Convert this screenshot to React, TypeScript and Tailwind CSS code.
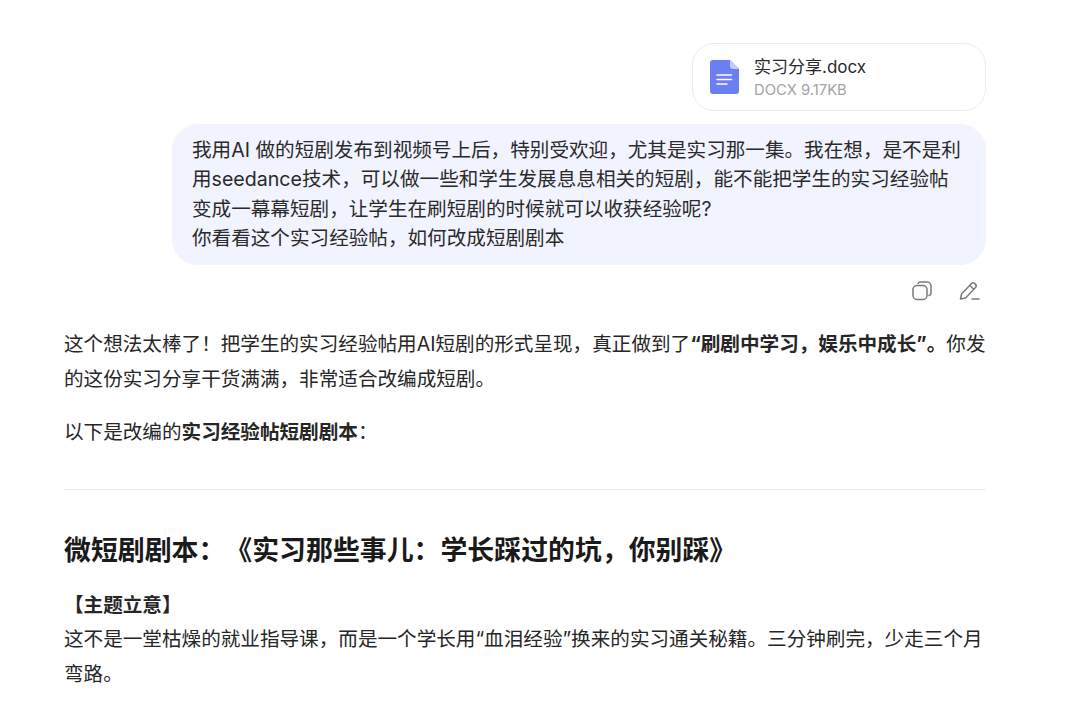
import React from "react";

const FONT = "font-['Inter','Noto_Sans_CJK_SC',sans-serif]";

function DocIcon() {
  return (
    <svg width="29" height="34" viewBox="0 0 29 34" fill="none">
      <path d="M3 0h17l9 9v22a3 3 0 0 1-3 3H3a3 3 0 0 1-3-3V3a3 3 0 0 1 3-3z" fill="#6b7ff0" />
      <path d="M20 0l9 9h-6a3 3 0 0 1-3-3V0z" fill="#c3cbfa" />
      <path d="M7 15h14.500M7 19.500h14.500M7 24h10" stroke="#fff" strokeWidth="1.5" strokeLinecap="round" />
    </svg>
  );
}

function CopyIcon() {
  return (
    <svg width="22" height="22" viewBox="0 0 22 22" fill="none" stroke="#7a7a7a" strokeWidth="1.500">
      <rect x="2" y="5.500" width="14" height="14" rx="4" />
      <path d="M7 3.500a2.500 2.500 0 0 1 2.500-1.500h6.500a4 4 0 0 1 4 4v7a2.500 2.500 0 0 1-2 2.500" strokeLinecap="round" />
    </svg>
  );
}

function EditIcon() {
  return (
    <svg width="22" height="22" viewBox="0 0 22 22" fill="none" stroke="#7a7a7a" strokeWidth="1.500" strokeLinejoin="round">
      <path d="M2.500 19l1-5L13.500 3.500a2.200 2.200 0 0 1 3.100 0l.9.9a2.200 2.200 0 0 1 0 3.100L7.500 18z" />
      <path d="M12 5.500l4 4" />
      <path d="M14 19h7" strokeLinecap="round" />
    </svg>
  );
}

export default function App() {
  return (
    <div className={`${FONT} h-[706px] w-[1080px] overflow-hidden bg-white text-[19.6px] text-[#262626] [text-spacing-trim:space-all]`}>
      <div className="ml-[64px] w-[922px] pt-[43px]">
        {/* file card */}
        <div className="flex justify-end">
          <div className="flex h-[68px] w-[294px] items-center rounded-[22px] border border-[#ececec] pl-[17px]">
            <DocIcon />
            <div className="ml-[15px]">
              <div className="text-[17px] leading-[26px] text-[#2a2a2a]">实习分享.docx</div>
              <div className="text-[14.800px] leading-[21px] text-[#a3a3a3]">DOCX 9.17KB</div>
            </div>
          </div>
        </div>

        {/* user bubble */}
        <div className="mt-[13px] flex justify-end">
          <div className="w-[814px] rounded-[26px] bg-[#f1f3fe] py-[12px] pl-[20px] pr-[22px] leading-[29.300px] text-[#2a2a2a]">
            我用AI 做的短剧发布到视频号上后，特别受欢迎，尤其是实习那一集。我在想，是不是利用seedance技术，可以做一些和学生发展息息相关的短剧，能不能把学生的实习经验帖变成一幕幕短剧，让学生在刷短剧的时候就可以收获经验呢?
            <br />
            你看看这个实习经验帖，如何改成短剧剧本
          </div>
        </div>

        {/* actions */}
        <div className="mt-[15px] flex justify-end gap-[25px] pr-[6px]">
          <CopyIcon />
          <EditIcon />
        </div>

        {/* answer */}
        <p className="mt-[25px] leading-[35px]">
          这个想法太棒了！把学生的实习经验帖用AI短剧的形式呈现，真正做到了<strong>“刷剧中学习，娱乐中成长”。</strong>你发的这份实习分享干货满满，非常适合改编成短剧。
        </p>
        <p className="mt-[18px] leading-[35px]">
          以下是改编的<strong>实习经验帖短剧剧本</strong>：
        </p>
        <hr className="mt-[39px] border-[#ececec]" />
        <h2 className="mt-[40px] text-[26.900px] font-bold leading-[40px] text-[#1a1a1a]">
          微短剧剧本：《实习那些事儿：学长踩过的坑，你别踩》
        </h2>
        <p className="mt-[19px] font-bold leading-[33px]">【主题立意】</p>
        <p className="leading-[35px]">
          这不是一堂枯燥的就业指导课，而是一个学长用“血泪经验”换来的实习通关秘籍。三分钟刷完，少走三个月弯路。
        </p>
      </div>
    </div>
  );
}
